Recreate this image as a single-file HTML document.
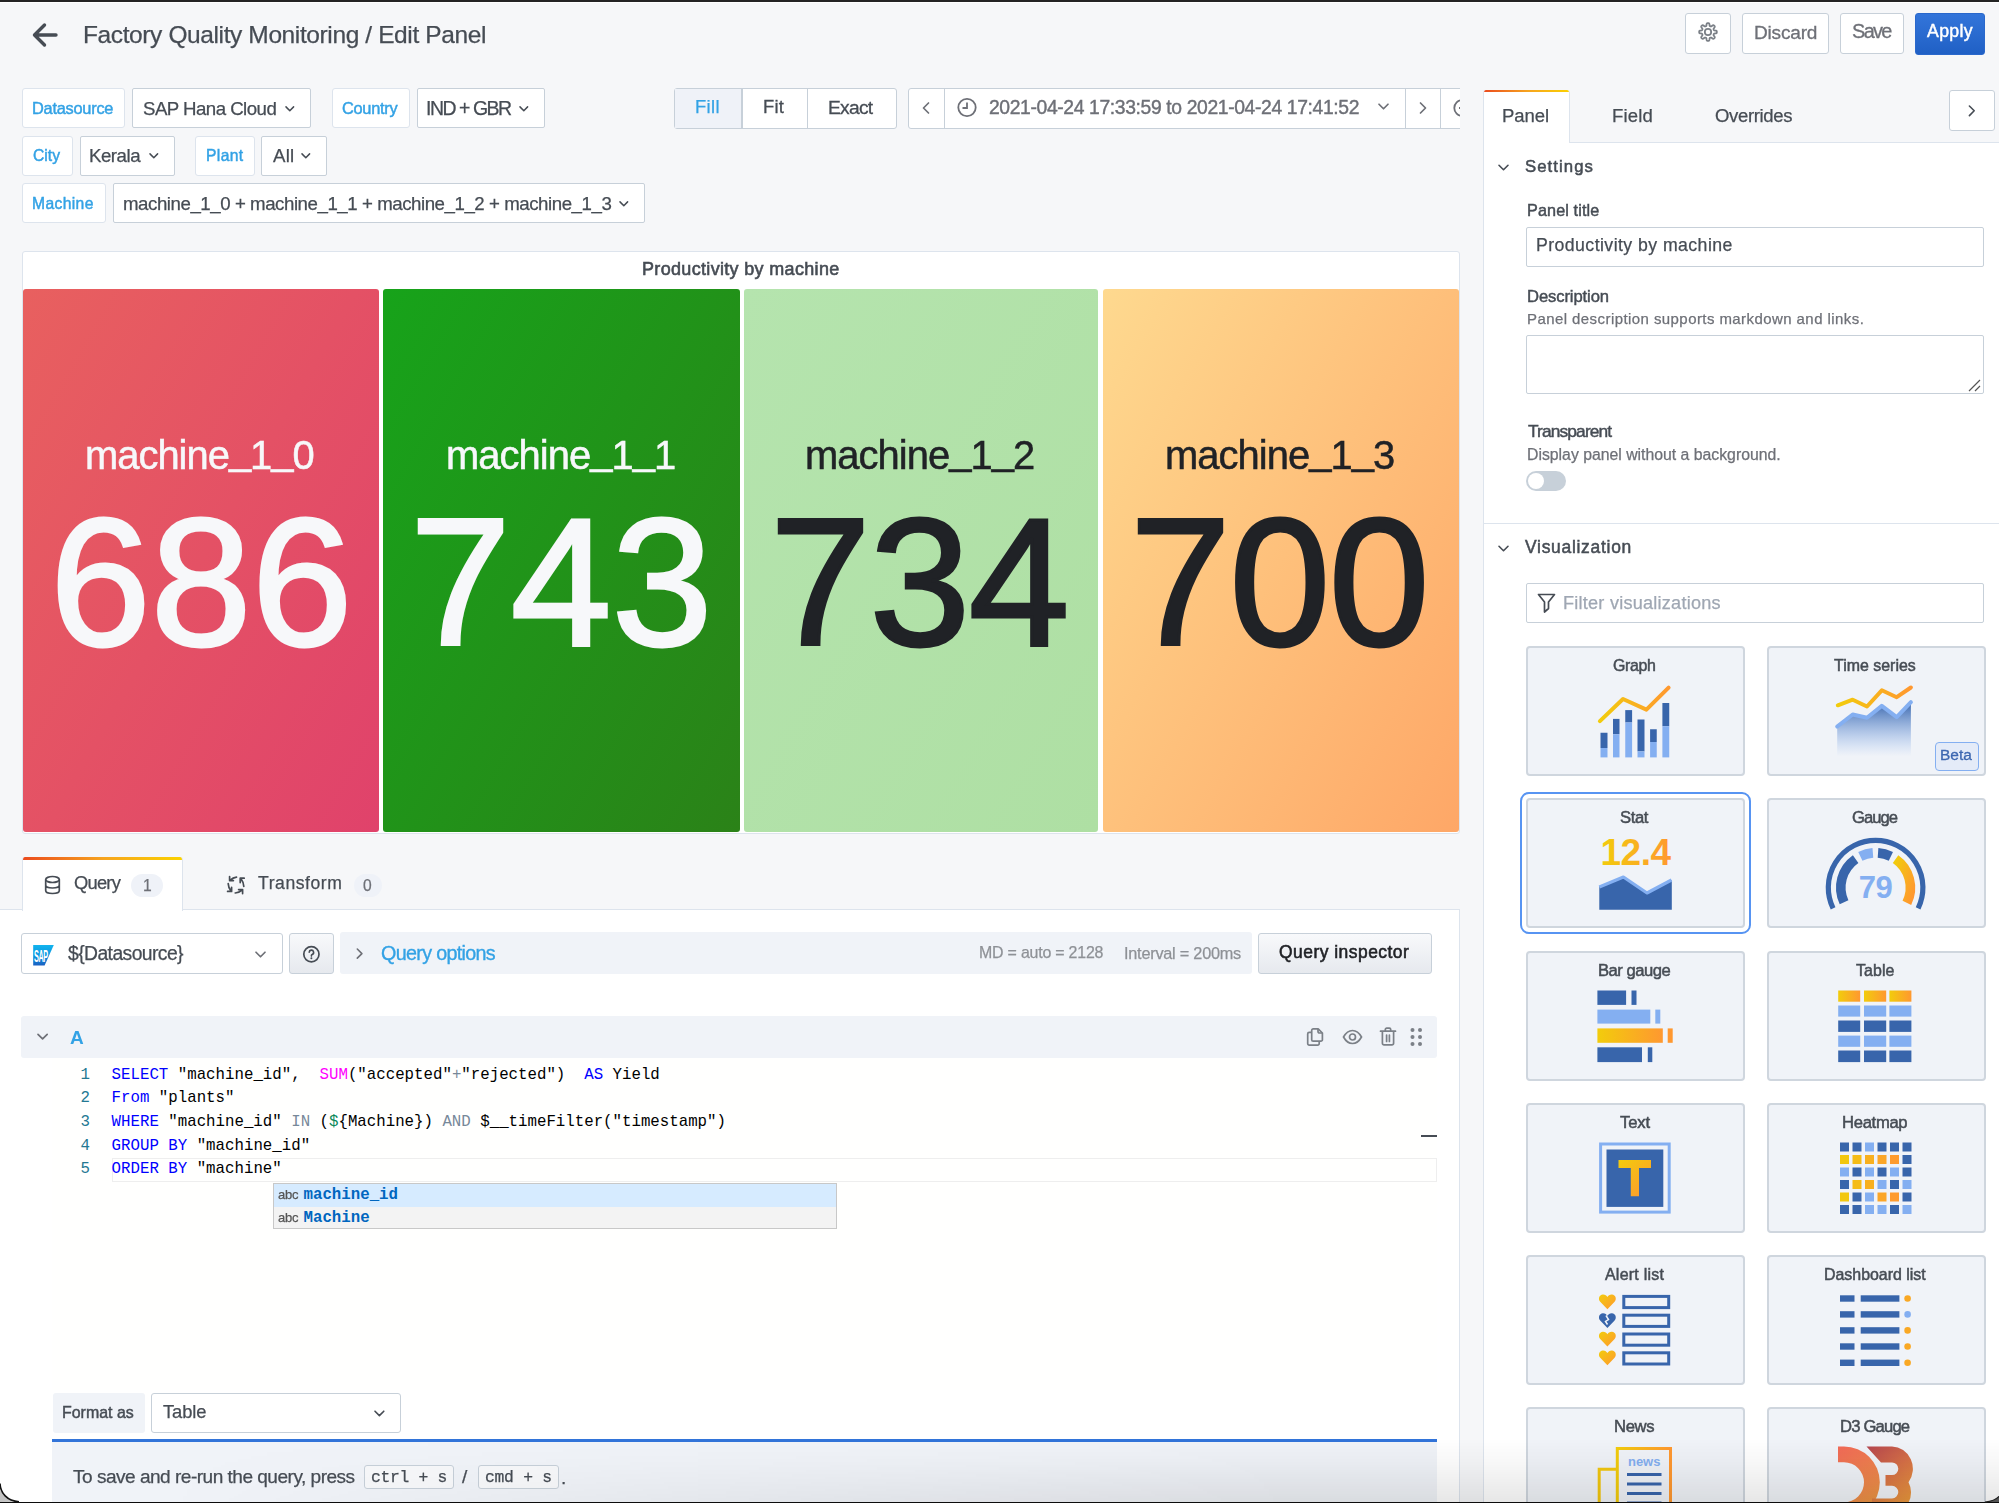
<!DOCTYPE html>
<html><head><meta charset="utf-8"><style>*{box-sizing:border-box;margin:0;padding:0}
html,body{-webkit-font-smoothing:antialiased;width:1999px;height:1503px;overflow:hidden;background:#f6f7f9;font-family:"Liberation Sans",sans-serif;color:#464c54;position:relative}
.a{position:absolute}
.box{position:absolute;background:#fff;border:1px solid #c7d0d9;border-radius:3px}
.chev{position:absolute;width:8px;height:8px;border-right:1.7px solid #6e7077;border-bottom:1.7px solid #6e7077;transform:rotate(45deg)}
.stat{position:absolute;top:289px;height:543px;border-radius:3px}
.card{position:absolute;width:219px;height:130px;background:#f0f3f8;border:2px solid #cfd6de;border-radius:4px}
.card svg{position:absolute}
</style></head><body>
<div class="a" style="left:0;top:0;width:1999px;height:2px;background:#242424"></div>
<div class="a" style="left:0;top:2px;width:1999px;height:1px;background:#fff"></div>
<svg class="a" style="left:30px;top:20px" width="30" height="30" viewBox="0 0 30 30"><path d="M14.5 5 L4.5 15 L14.5 25 M4.5 15 L26 15" fill="none" stroke="#464c54" stroke-width="3.4" stroke-linecap="round" stroke-linejoin="round"/></svg>
<div class="a" style="left:83.09px;top:23.25px;font-size:24.51px;line-height:24.51px;letter-spacing:-0.387px;font-weight:normal;color:#464c54;font-family:'Liberation Sans';white-space:nowrap;will-change:transform;-webkit-text-stroke:0.25px #464c54;">Factory Quality Monitoring / Edit Panel</div>
<div class="box" style="left:1685px;top:13px;width:46px;height:41px"></div>
<svg class="a" style="left:1696.7px;top:21.1px" width="22" height="22" viewBox="0 0 22 22"><path fill="none" stroke="#7b8087" stroke-width="1.75" stroke-linejoin="round" d="M19.85,11.00 L19.84,10.77 L19.82,10.54 L19.78,10.31 L19.70,10.09 L19.53,9.88 L19.22,9.70 L18.68,9.58 L18.03,9.51 L17.50,9.44 L17.17,9.35 L17.00,9.22 L16.89,9.09 L16.81,8.94 L16.74,8.79 L16.68,8.65 L16.62,8.50 L16.56,8.35 L16.52,8.19 L16.50,8.02 L16.54,7.80 L16.70,7.51 L17.03,7.09 L17.44,6.57 L17.73,6.11 L17.83,5.76 L17.80,5.50 L17.70,5.28 L17.57,5.09 L17.42,4.91 L17.26,4.74 L17.09,4.58 L16.91,4.43 L16.72,4.30 L16.50,4.20 L16.24,4.17 L15.89,4.27 L15.43,4.56 L14.91,4.97 L14.49,5.30 L14.20,5.46 L13.98,5.50 L13.81,5.48 L13.65,5.44 L13.50,5.38 L13.35,5.32 L13.21,5.26 L13.06,5.19 L12.91,5.11 L12.78,5.00 L12.65,4.83 L12.56,4.50 L12.49,3.97 L12.42,3.32 L12.30,2.78 L12.12,2.47 L11.91,2.30 L11.69,2.22 L11.46,2.18 L11.23,2.16 L11.00,2.15 L10.77,2.16 L10.54,2.18 L10.31,2.22 L10.09,2.30 L9.88,2.47 L9.70,2.78 L9.58,3.32 L9.51,3.97 L9.44,4.50 L9.35,4.83 L9.22,5.00 L9.09,5.11 L8.94,5.19 L8.79,5.26 L8.65,5.32 L8.50,5.38 L8.35,5.44 L8.19,5.48 L8.02,5.50 L7.80,5.46 L7.51,5.30 L7.09,4.97 L6.57,4.56 L6.11,4.27 L5.76,4.17 L5.50,4.20 L5.28,4.30 L5.09,4.43 L4.91,4.58 L4.74,4.74 L4.58,4.91 L4.43,5.09 L4.30,5.28 L4.20,5.50 L4.17,5.76 L4.27,6.11 L4.56,6.57 L4.97,7.09 L5.30,7.51 L5.46,7.80 L5.50,8.02 L5.48,8.19 L5.44,8.35 L5.38,8.50 L5.32,8.65 L5.26,8.79 L5.19,8.94 L5.11,9.09 L5.00,9.22 L4.83,9.35 L4.50,9.44 L3.97,9.51 L3.32,9.58 L2.78,9.70 L2.47,9.88 L2.30,10.09 L2.22,10.31 L2.18,10.54 L2.16,10.77 L2.15,11.00 L2.16,11.23 L2.18,11.46 L2.22,11.69 L2.30,11.91 L2.47,12.12 L2.78,12.30 L3.32,12.42 L3.97,12.49 L4.50,12.56 L4.83,12.65 L5.00,12.78 L5.11,12.91 L5.19,13.06 L5.26,13.21 L5.32,13.35 L5.38,13.50 L5.44,13.65 L5.48,13.81 L5.50,13.98 L5.46,14.20 L5.30,14.49 L4.97,14.91 L4.56,15.43 L4.27,15.89 L4.17,16.24 L4.20,16.50 L4.30,16.72 L4.43,16.91 L4.58,17.09 L4.74,17.26 L4.91,17.42 L5.09,17.57 L5.28,17.70 L5.50,17.80 L5.76,17.83 L6.11,17.73 L6.57,17.44 L7.09,17.03 L7.51,16.70 L7.80,16.54 L8.02,16.50 L8.19,16.52 L8.35,16.56 L8.50,16.62 L8.65,16.68 L8.79,16.74 L8.94,16.81 L9.09,16.89 L9.22,17.00 L9.35,17.17 L9.44,17.50 L9.51,18.03 L9.58,18.68 L9.70,19.22 L9.88,19.53 L10.09,19.70 L10.31,19.78 L10.54,19.82 L10.77,19.84 L11.00,19.85 L11.23,19.84 L11.46,19.82 L11.69,19.78 L11.91,19.70 L12.12,19.53 L12.30,19.22 L12.42,18.68 L12.49,18.03 L12.56,17.50 L12.65,17.17 L12.78,17.00 L12.91,16.89 L13.06,16.81 L13.21,16.74 L13.35,16.68 L13.50,16.62 L13.65,16.56 L13.81,16.52 L13.98,16.50 L14.20,16.54 L14.49,16.70 L14.91,17.03 L15.43,17.44 L15.89,17.73 L16.24,17.83 L16.50,17.80 L16.72,17.70 L16.91,17.57 L17.09,17.42 L17.26,17.26 L17.42,17.09 L17.57,16.91 L17.70,16.72 L17.80,16.50 L17.83,16.24 L17.73,15.89 L17.44,15.43 L17.03,14.91 L16.70,14.49 L16.54,14.20 L16.50,13.98 L16.52,13.81 L16.56,13.65 L16.62,13.50 L16.68,13.35 L16.74,13.21 L16.81,13.06 L16.89,12.91 L17.00,12.78 L17.17,12.65 L17.50,12.56 L18.03,12.49 L18.68,12.42 L19.22,12.30 L19.53,12.12 L19.70,11.91 L19.78,11.69 L19.82,11.46 L19.84,11.23 L19.85,11.00Z"/><circle cx="11" cy="11" r="3.2" fill="none" stroke="#7b8087" stroke-width="1.75"/></svg>
<div class="box" style="left:1742px;top:13px;width:87px;height:41px"></div>
<div class="a" style="left:1754.11px;top:22.56px;font-size:19.06px;line-height:19.06px;letter-spacing:-0.193px;font-weight:normal;color:#6e7077;font-family:'Liberation Sans';white-space:nowrap;will-change:transform;-webkit-text-stroke:0.3px #6e7077;">Discard</div>
<div class="box" style="left:1840px;top:13px;width:64px;height:41px"></div>
<div class="a" style="left:1851.78px;top:21.85px;font-size:19.91px;line-height:19.91px;letter-spacing:-1.651px;font-weight:normal;color:#6e7077;font-family:'Liberation Sans';white-space:nowrap;will-change:transform;-webkit-text-stroke:0.3px #6e7077;">Save</div>
<div class="box" style="left:1915px;top:12.5px;width:70px;height:42px;background:linear-gradient(#3375da,#2060c5);border-color:#2a68cc"></div>
<div class="a" style="left:1926.50px;top:22.92px;font-size:17.70px;line-height:17.70px;letter-spacing:0.355px;font-weight:normal;color:#ffffff;font-family:'Liberation Sans';white-space:nowrap;will-change:transform;-webkit-text-stroke:0.45px #ffffff;">Apply</div>
<div class="box" style="left:22px;top:88px;width:103px;height:40px;border-color:#dde4ed"></div>
<div class="a" style="left:32.42px;top:100.06px;font-size:16.36px;line-height:16.36px;letter-spacing:-0.244px;font-weight:normal;color:#33a2e5;font-family:'Liberation Sans';white-space:nowrap;will-change:transform;-webkit-text-stroke:0.45px #33a2e5;">Datasource</div>
<div class="box" style="left:131.5px;top:88px;width:179.0px;height:40px;border-radius:2px"></div>
<div class="a" style="left:143.42px;top:99.71px;font-size:18.66px;line-height:18.66px;letter-spacing:-0.531px;font-weight:normal;color:#464c54;font-family:'Liberation Sans';white-space:nowrap;will-change:transform;-webkit-text-stroke:0.25px #464c54;">SAP Hana Cloud</div>
<svg class="a" style="left:283.70px;top:102.70px" width="11.6" height="11.6" viewBox="-5.8 -5.8 11.6 11.6"><path d="M-3.8,-1.9 L0,1.9 L3.8,-1.9" fill="none" stroke="#464c54" stroke-width="1.5" stroke-linecap="round" stroke-linejoin="round"/></svg>
<div class="box" style="left:331.5px;top:88px;width:78.0px;height:40px;border-color:#dde4ed"></div>
<div class="a" style="left:342.23px;top:100.06px;font-size:16.36px;line-height:16.36px;letter-spacing:-0.284px;font-weight:normal;color:#33a2e5;font-family:'Liberation Sans';white-space:nowrap;will-change:transform;-webkit-text-stroke:0.45px #33a2e5;">Country</div>
<div class="box" style="left:416.5px;top:88px;width:128.5px;height:40px;border-radius:2px"></div>
<div class="a" style="left:426.38px;top:99.01px;font-size:19.48px;line-height:19.48px;letter-spacing:-1.473px;font-weight:normal;color:#464c54;font-family:'Liberation Sans';white-space:nowrap;will-change:transform;-webkit-text-stroke:0.25px #464c54;">IND + GBR</div>
<svg class="a" style="left:518.20px;top:102.70px" width="11.6" height="11.6" viewBox="-5.8 -5.8 11.6 11.6"><path d="M-3.8,-1.9 L0,1.9 L3.8,-1.9" fill="none" stroke="#464c54" stroke-width="1.5" stroke-linecap="round" stroke-linejoin="round"/></svg>
<div class="box" style="left:22px;top:135.5px;width:50.5px;height:40px;border-color:#dde4ed"></div>
<div class="a" style="left:32.97px;top:148.14px;font-size:15.66px;line-height:15.66px;letter-spacing:0.022px;font-weight:normal;color:#33a2e5;font-family:'Liberation Sans';white-space:nowrap;will-change:transform;-webkit-text-stroke:0.45px #33a2e5;">City</div>
<div class="box" style="left:79.5px;top:135.5px;width:95.0px;height:40px;border-radius:2px"></div>
<div class="a" style="left:89.34px;top:147.21px;font-size:18.66px;line-height:18.66px;letter-spacing:-0.477px;font-weight:normal;color:#464c54;font-family:'Liberation Sans';white-space:nowrap;will-change:transform;-webkit-text-stroke:0.25px #464c54;">Kerala</div>
<svg class="a" style="left:147.70px;top:150.20px" width="11.6" height="11.6" viewBox="-5.8 -5.8 11.6 11.6"><path d="M-3.8,-1.9 L0,1.9 L3.8,-1.9" fill="none" stroke="#464c54" stroke-width="1.5" stroke-linecap="round" stroke-linejoin="round"/></svg>
<div class="box" style="left:194.5px;top:135.5px;width:60.0px;height:40px;border-color:#dde4ed"></div>
<div class="a" style="left:205.68px;top:148.14px;font-size:15.66px;line-height:15.66px;letter-spacing:0.369px;font-weight:normal;color:#33a2e5;font-family:'Liberation Sans';white-space:nowrap;will-change:transform;-webkit-text-stroke:0.45px #33a2e5;">Plant</div>
<div class="box" style="left:261px;top:135.5px;width:65.5px;height:40px;border-radius:2px"></div>
<div class="a" style="left:273.30px;top:147.21px;font-size:18.66px;line-height:18.66px;letter-spacing:0.249px;font-weight:normal;color:#464c54;font-family:'Liberation Sans';white-space:nowrap;will-change:transform;-webkit-text-stroke:0.25px #464c54;">All</div>
<svg class="a" style="left:299.70px;top:150.20px" width="11.6" height="11.6" viewBox="-5.8 -5.8 11.6 11.6"><path d="M-3.8,-1.9 L0,1.9 L3.8,-1.9" fill="none" stroke="#464c54" stroke-width="1.5" stroke-linecap="round" stroke-linejoin="round"/></svg>
<div class="box" style="left:22px;top:183px;width:83.5px;height:40px;border-color:#dde4ed"></div>
<div class="a" style="left:32.48px;top:195.64px;font-size:15.66px;line-height:15.66px;letter-spacing:0.361px;font-weight:normal;color:#33a2e5;font-family:'Liberation Sans';white-space:nowrap;will-change:transform;-webkit-text-stroke:0.45px #33a2e5;">Machine</div>
<div class="box" style="left:112.5px;top:183px;width:532.0px;height:40px;border-radius:2px"></div>
<div class="a" style="left:123.13px;top:194.71px;font-size:18.66px;line-height:18.66px;letter-spacing:-0.446px;font-weight:normal;color:#464c54;font-family:'Liberation Sans';white-space:nowrap;will-change:transform;-webkit-text-stroke:0.25px #464c54;">machine<span style="position:relative;top:-0.08em">_</span>1<span style="position:relative;top:-0.08em">_</span>0 + machine<span style="position:relative;top:-0.08em">_</span>1<span style="position:relative;top:-0.08em">_</span>1 + machine<span style="position:relative;top:-0.08em">_</span>1<span style="position:relative;top:-0.08em">_</span>2 + machine<span style="position:relative;top:-0.08em">_</span>1<span style="position:relative;top:-0.08em">_</span>3</div>
<svg class="a" style="left:617.70px;top:197.70px" width="11.6" height="11.6" viewBox="-5.8 -5.8 11.6 11.6"><path d="M-3.8,-1.9 L0,1.9 L3.8,-1.9" fill="none" stroke="#464c54" stroke-width="1.5" stroke-linecap="round" stroke-linejoin="round"/></svg>
<div class="box" style="left:674px;top:88px;width:223px;height:41px"></div>
<div class="a" style="left:675px;top:89px;width:66px;height:39px;background:#eff2f8"></div>
<div class="a" style="left:740.5px;top:89px;width:2px;height:39px;background:#c7d0d9"></div>
<div class="a" style="left:806.5px;top:89px;width:1px;height:39px;background:#c7d0d9"></div>
<div class="a" style="left:695.36px;top:98.24px;font-size:18.38px;line-height:18.38px;letter-spacing:0.389px;font-weight:normal;color:#33a2e5;font-family:'Liberation Sans';white-space:nowrap;will-change:transform;-webkit-text-stroke:0.25px #33a2e5;">Fill</div>
<div class="a" style="left:763.36px;top:98.24px;font-size:18.38px;line-height:18.38px;letter-spacing:0.226px;font-weight:normal;color:#464c54;font-family:'Liberation Sans';white-space:nowrap;will-change:transform;-webkit-text-stroke:0.3px #464c54;">Fit</div>
<div class="a" style="left:827.80px;top:97.55px;font-size:19.20px;line-height:19.20px;letter-spacing:-0.696px;font-weight:normal;color:#464c54;font-family:'Liberation Sans';white-space:nowrap;will-change:transform;-webkit-text-stroke:0.3px #464c54;">Exact</div>
<div class="a" style="left:908px;top:88px;width:552px;height:41px;overflow:hidden"><div class="box" style="left:0;top:0;width:600px;height:41px"></div><div class="a" style="left:35.5px;top:0;width:1px;height:41px;background:#c7d0d9"></div><div class="a" style="left:497px;top:0;width:1px;height:41px;background:#c7d0d9"></div><div class="a" style="left:532px;top:0;width:1px;height:41px;background:#c7d0d9"></div><svg class="a" style="left:535px;top:9px" width="22" height="22" viewBox="0 0 22 22"><circle cx="19.3" cy="11" r="8" fill="none" stroke="#6e7077" stroke-width="1.8"/><path d="M16 11h4" stroke="#6e7077" stroke-width="1.8"/></svg></div>
<svg class="a" style="left:919.00px;top:100.50px" width="14" height="14" viewBox="-7.0 -7.0 14 14"><path d="M2.5,-5 L-2.5,0 L2.5,5" fill="none" stroke="#6e7077" stroke-width="1.7" stroke-linecap="round" stroke-linejoin="round"/></svg>
<svg class="a" style="left:1415.70px;top:100.50px" width="14" height="14" viewBox="-7.0 -7.0 14 14"><path d="M-2.5,-5 L2.5,0 L-2.5,5" fill="none" stroke="#6e7077" stroke-width="1.7" stroke-linecap="round" stroke-linejoin="round"/></svg>
<svg class="a" style="left:1377.00px;top:100.00px" width="13.0" height="13.0" viewBox="-6.5 -6.5 13.0 13.0"><path d="M-4.5,-2.25 L0,2.25 L4.5,-2.25" fill="none" stroke="#6e7077" stroke-width="1.7" stroke-linecap="round" stroke-linejoin="round"/></svg>
<svg class="a" style="left:956px;top:97px" width="22" height="22" viewBox="0 0 22 22"><circle cx="11" cy="10.5" r="8.7" fill="none" stroke="#6e7077" stroke-width="1.8"/><path d="M11 5.5v5.5h-4.5" fill="none" stroke="#6e7077" stroke-width="1.8"/></svg>
<div class="a" style="left:989.09px;top:97.63px;font-size:19.34px;line-height:19.34px;letter-spacing:-0.376px;font-weight:normal;color:#6e7077;font-family:'Liberation Sans';white-space:nowrap;will-change:transform;-webkit-text-stroke:0.4px #6e7077;">2021-04-24 17:33:59 to 2021-04-24 17:41:52</div>
<div class="a" style="left:21.5px;top:250.5px;width:1438.5px;height:583px;background:#fff;border:1px solid #dde4ed;border-radius:3px"></div>
<div class="a" style="left:641.60px;top:260.68px;font-size:17.97px;line-height:17.97px;letter-spacing:0.346px;font-weight:normal;color:#464c54;font-family:'Liberation Sans';white-space:nowrap;will-change:transform;-webkit-text-stroke:0.6px #464c54;">Productivity by machine</div>
<div class="stat" style="left:23px;width:356px;background:linear-gradient(120deg,#e8605f,#e0426b)"></div>
<div class="a" style="left:85.41px;top:435.53px;font-size:39.90px;line-height:39.90px;letter-spacing:-0.988px;font-weight:normal;color:#f7f8fa;font-family:'Liberation Sans';white-space:nowrap;will-change:transform;-webkit-text-stroke:0.5px #f7f8fa;">machine<span style="position:relative;top:-0.13em">_</span>1<span style="position:relative;top:-0.13em">_</span>0</div>
<div class="a" style="left:49.71px;top:492.12px;font-size:181.19px;line-height:181.19px;letter-spacing:0.063px;font-weight:normal;color:#f7f8fa;font-family:'Liberation Sans';white-space:nowrap;will-change:transform;-webkit-text-stroke:3px #f7f8fa;">686</div>
<div class="stat" style="left:383px;width:357px;background:linear-gradient(120deg,#17a31a,#2b8218)"></div>
<div class="a" style="left:445.91px;top:435.53px;font-size:39.90px;line-height:39.90px;letter-spacing:-0.925px;font-weight:normal;color:#f7f8fa;font-family:'Liberation Sans';white-space:nowrap;will-change:transform;-webkit-text-stroke:0.5px #f7f8fa;">machine<span style="position:relative;top:-0.13em">_</span>1<span style="position:relative;top:-0.13em">_</span>1</div>
<div class="a" style="left:410.21px;top:492.12px;font-size:181.19px;line-height:181.19px;letter-spacing:0.063px;font-weight:normal;color:#f7f8fa;font-family:'Liberation Sans';white-space:nowrap;will-change:transform;-webkit-text-stroke:3px #f7f8fa;">743</div>
<div class="stat" style="left:743.8px;width:354.20000000000005px;background:linear-gradient(120deg,#b5e4ae,#aedfa3)"></div>
<div class="a" style="left:805.31px;top:435.53px;font-size:39.90px;line-height:39.90px;letter-spacing:-0.925px;font-weight:normal;color:#202226;font-family:'Liberation Sans';white-space:nowrap;will-change:transform;-webkit-text-stroke:0.5px #202226;">machine<span style="position:relative;top:-0.13em">_</span>1<span style="position:relative;top:-0.13em">_</span>2</div>
<div class="a" style="left:769.61px;top:492.12px;font-size:181.19px;line-height:181.19px;letter-spacing:-1.352px;font-weight:normal;color:#202226;font-family:'Liberation Sans';white-space:nowrap;will-change:transform;-webkit-text-stroke:3px #202226;">734</div>
<div class="stat" style="left:1103px;width:356px;background:linear-gradient(120deg,#fed98f,#fea767)"></div>
<div class="a" style="left:1165.41px;top:435.53px;font-size:39.90px;line-height:39.90px;letter-spacing:-0.925px;font-weight:normal;color:#202226;font-family:'Liberation Sans';white-space:nowrap;will-change:transform;-webkit-text-stroke:0.5px #202226;">machine<span style="position:relative;top:-0.13em">_</span>1<span style="position:relative;top:-0.13em">_</span>3</div>
<div class="a" style="left:1129.71px;top:492.12px;font-size:181.19px;line-height:181.19px;letter-spacing:-1.352px;font-weight:normal;color:#202226;font-family:'Liberation Sans';white-space:nowrap;will-change:transform;-webkit-text-stroke:3px #202226;">700</div>
<div class="a" style="left:0;top:909px;width:1460px;height:1px;background:#dde4ed"></div>
<div class="a" style="left:0;top:910px;width:1459px;height:593px;background:#fff"></div>
<div class="a" style="left:1459px;top:910px;width:1px;height:593px;background:#dde4ed"></div>
<div class="a" style="left:22px;top:857px;width:161px;height:54px;background:#fff;border-left:1px solid #dde4ed;border-right:1px solid #dde4ed;border-radius:3px 3px 0 0;overflow:hidden"><div class="a" style="left:0;top:0;width:161px;height:2.5px;background:linear-gradient(90deg,#eb4b1e,#f6a41f,#fbd300)"></div></div>
<svg class="a" style="left:44px;top:875px" width="17" height="20" viewBox="0 0 17 20"><ellipse cx="8.5" cy="4.5" rx="6.8" ry="3" fill="none" stroke="#464c54" stroke-width="1.7"/><path d="M1.7 4.5v11c0 1.7 3 3 6.8 3s6.8-1.3 6.8-3v-11M1.7 10c0 1.7 3 3 6.8 3s6.8-1.3 6.8-3" fill="none" stroke="#464c54" stroke-width="1.7"/></svg>
<div class="a" style="left:73.94px;top:874.47px;font-size:18.35px;line-height:18.35px;letter-spacing:-0.775px;font-weight:normal;color:#464c54;font-family:'Liberation Sans';white-space:nowrap;will-change:transform;-webkit-text-stroke:0.25px #464c54;">Query</div>
<div class="a" style="left:131.2px;top:874.3px;width:31.4px;height:22.7px;border-radius:11.5px;background:#eff2f8"></div>
<div class="a" style="left:142.52px;top:877.76px;font-size:15.64px;line-height:15.64px;letter-spacing:0.000px;font-weight:normal;color:#6e7077;font-family:'Liberation Sans';white-space:nowrap;will-change:transform;-webkit-text-stroke:0.25px #6e7077;">1</div>
<svg class="a" style="left:220px;top:870px" width="32" height="30" viewBox="0 0 32 30"><g fill="none" stroke="#464c54" stroke-width="1.7" stroke-linecap="round" stroke-linejoin="round"><path d="M16.5,7.2 Q13,7.6 10.2,10.2 M9.6,6.6 V10.6 H13.4"/><path d="M23.8,16.4 Q23.6,12.4 21,8.8 M20.2,12.6 V8.2 H24.2"/><path d="M15.2,23 Q19.2,22.8 22.2,20.2 M22.6,23.6 V19.6 H18.6"/><path d="M8.2,13.6 Q8.4,18 11,21 M7.6,21.4 H11.6 V17.4"/></g></svg>
<div class="a" style="left:258.33px;top:875.13px;font-size:17.57px;line-height:17.57px;letter-spacing:0.563px;font-weight:normal;color:#464c54;font-family:'Liberation Sans';white-space:nowrap;will-change:transform;-webkit-text-stroke:0.25px #464c54;">Transform</div>
<div class="a" style="left:353.7px;top:874.3px;width:28.3px;height:22.7px;border-radius:11.5px;background:#eff2f8"></div>
<div class="a" style="left:362.51px;top:877.76px;font-size:15.64px;line-height:15.64px;letter-spacing:0.000px;font-weight:normal;color:#6e7077;font-family:'Liberation Sans';white-space:nowrap;will-change:transform;-webkit-text-stroke:0.25px #6e7077;">0</div>
<div class="box" style="left:21.3px;top:932.7px;width:261.4px;height:41px"></div>
<svg class="a" style="left:33px;top:944.5px" width="21" height="21" viewBox="0 0 21 21"><defs><linearGradient id="sapg" x1="0" y1="0" x2="0" y2="1"><stop offset="0" stop-color="#12b4ee"/><stop offset="0.6" stop-color="#0a8fdc"/><stop offset="1" stop-color="#1b5fc1"/></linearGradient></defs><path d="M0.2 0H20.8L11.6 20.5H0.2Z" fill="url(#sapg)"/><text x="1.6" y="13.8" font-family="Liberation Sans" font-weight="bold" font-size="13" fill="#fff" letter-spacing="-0.6" transform="scale(0.56,1.2)">SAP</text></svg>
<div class="a" style="left:67.50px;top:944.13px;font-size:19.33px;line-height:19.33px;letter-spacing:-0.577px;font-weight:normal;color:#464c54;font-family:'Liberation Sans';white-space:nowrap;will-change:transform;-webkit-text-stroke:0.25px #464c54;">${Datasource}</div>
<svg class="a" style="left:254.10px;top:948.00px" width="13.0" height="13.0" viewBox="-6.5 -6.5 13.0 13.0"><path d="M-4.5,-2.25 L0,2.25 L4.5,-2.25" fill="none" stroke="#6e7077" stroke-width="1.7" stroke-linecap="round" stroke-linejoin="round"/></svg>
<div class="box" style="left:288.75px;top:932.7px;width:45px;height:41px;background:linear-gradient(#f8f9fb,#e6e9ee)"></div>
<svg class="a" style="left:300.5px;top:943.5px" width="21" height="21" viewBox="0 0 21 21"><circle cx="10.4" cy="10.2" r="7.6" fill="none" stroke="#464c54" stroke-width="1.7"/><path d="M8.2 8.3a2.2 2.2 0 1 1 3 2.1c-.6.3-.8.7-.8 1.3v.4" fill="none" stroke="#464c54" stroke-width="1.6" stroke-linecap="round"/><circle cx="10.4" cy="14.3" r="1" fill="#464c54"/></svg>
<div class="a" style="left:339.5px;top:932.2px;width:912.5px;height:41.4px;background:#f0f3f8;border-radius:3px"></div>
<svg class="a" style="left:353.10px;top:946.80px" width="13.2" height="13.2" viewBox="-6.6 -6.6 13.2 13.2"><path d="M-2.3,-4.6 L2.3,0 L-2.3,4.6" fill="none" stroke="#6e7077" stroke-width="1.6" stroke-linecap="round" stroke-linejoin="round"/></svg>
<div class="a" style="left:380.82px;top:943.79px;font-size:19.74px;line-height:19.74px;letter-spacing:-0.677px;font-weight:normal;color:#33a2e5;font-family:'Liberation Sans';white-space:nowrap;will-change:transform;-webkit-text-stroke:0.35px #33a2e5;">Query options</div>
<div class="a" style="left:979.16px;top:945.32px;font-size:15.93px;line-height:15.93px;letter-spacing:-0.202px;font-weight:normal;color:#8e9196;font-family:'Liberation Sans';white-space:nowrap;will-change:transform;-webkit-text-stroke:0.25px #8e9196;">MD = auto = 2128</div>
<div class="a" style="left:1123.73px;top:945.00px;font-size:16.30px;line-height:16.30px;letter-spacing:-0.238px;font-weight:normal;color:#8e9196;font-family:'Liberation Sans';white-space:nowrap;will-change:transform;-webkit-text-stroke:0.25px #8e9196;">Interval = 200ms</div>
<div class="box" style="left:1258px;top:932.8px;width:174px;height:40.8px;background:linear-gradient(#f8f9fb,#e6e9ee)"></div>
<div class="a" style="left:1279.18px;top:943.55px;font-size:17.43px;line-height:17.43px;letter-spacing:0.491px;font-weight:normal;color:#202226;font-family:'Liberation Sans';white-space:nowrap;will-change:transform;-webkit-text-stroke:0.55px #202226;">Query inspector</div>
<div class="a" style="left:21px;top:1016.4px;width:1416px;height:41.4px;background:#f0f3f8;border-radius:3px"></div>
<svg class="a" style="left:35.70px;top:1030.40px" width="13.2" height="13.2" viewBox="-6.6 -6.6 13.2 13.2"><path d="M-4.6,-2.3 L0,2.3 L4.6,-2.3" fill="none" stroke="#6e7077" stroke-width="1.7" stroke-linecap="round" stroke-linejoin="round"/></svg>
<div class="a" style="left:69.70px;top:1028.27px;font-size:19.06px;line-height:19.06px;letter-spacing:0.000px;font-weight:bold;color:#33a2e5;font-family:'Liberation Sans';white-space:nowrap;will-change:transform;">A</div>
<svg class="a" style="left:1305px;top:1026px" width="20" height="21" viewBox="0 0 20 21"><g fill="none" stroke="#7b8087" stroke-width="1.7" stroke-linejoin="round"><path d="M8.2,2.8 H13.2 L17.4,7 V13.7 A1.5,1.5 0 0 1 15.9,15.2 H8.2 A1.5,1.5 0 0 1 6.7,13.7 V4.3 A1.5,1.5 0 0 1 8.2,2.8 Z"/><path d="M13,3 V5.5 A1.5,1.5 0 0 0 14.5,7 H17.2"/><path d="M6.7,6.4 H4.2 A1.5,1.5 0 0 0 2.7,7.9 V17.6 A1.5,1.5 0 0 0 4.2,19.1 H12.7 A1.5,1.5 0 0 0 14.2,17.6 V15.2"/></g></svg>
<svg class="a" style="left:1341.5px;top:1028px" width="21" height="18" viewBox="0 0 21 18"><g fill="none" stroke="#7b8087" stroke-width="1.7"><path d="M1.5 9C4 4.5 7 2.5 10.5 2.5S17 4.5 19.5 9C17 13.5 14 15.5 10.5 15.5S4 13.5 1.5 9z"/><circle cx="10.5" cy="9" r="3"/></g></svg>
<svg class="a" style="left:1379px;top:1026px" width="18" height="21" viewBox="0 0 18 21"><g fill="none" stroke="#7b8087" stroke-width="1.7" stroke-linecap="round" stroke-linejoin="round"><path d="M1.5,5.2 H16.5 M6.3,5 V3.6 A1.4,1.4 0 0 1 7.7,2.2 H10.3 A1.4,1.4 0 0 1 11.7,3.6 V5 M3.4,5.5 V17.2 A1.6,1.6 0 0 0 5,18.8 H13 A1.6,1.6 0 0 0 14.6,17.2 V5.5 M7.6,9 V15.5 M10.4,9 V15.5"/></g></svg>
<svg class="a" style="left:1409px;top:1027px" width="15" height="20" viewBox="0 0 15 20"><g fill="#7b8087"><circle cx="3.5" cy="3" r="2"/><circle cx="11" cy="3" r="2"/><circle cx="3.5" cy="10" r="2"/><circle cx="11" cy="10" r="2"/><circle cx="3.5" cy="17" r="2"/><circle cx="11" cy="17" r="2"/></g></svg>
<div class="a" style="left:52px;top:1058px;width:1385px;height:332px;background:#fffffe"></div>
<div class="a" style="left:112px;top:1157.7px;width:1325px;height:24px;border:1px solid #eeeeee"></div>
<div class="a" style="left:1421px;top:1135px;width:16px;height:2px;background:#464c54"></div>
<div class="a" style="left:80.5px;top:1063.66px;font-family:'Liberation Mono',monospace;font-size:15.75px;line-height:23.5px;white-space:pre;color:#237893;">1</div>
<div class="a" style="left:111.6px;top:1063.66px;font-family:'Liberation Mono',monospace;font-size:15.75px;line-height:23.5px;white-space:pre;color:#000;"><span style="color:#0000ff">SELECT</span> "machine_id",  <span style="color:#ff00ff">SUM</span>("accepted"<span style="color:#778899">+</span>"rejected")  <span style="color:#0000ff">AS</span> Yield</div>
<div class="a" style="left:80.5px;top:1087.46px;font-family:'Liberation Mono',monospace;font-size:15.75px;line-height:23.5px;white-space:pre;color:#237893;">2</div>
<div class="a" style="left:111.6px;top:1087.46px;font-family:'Liberation Mono',monospace;font-size:15.75px;line-height:23.5px;white-space:pre;color:#000;"><span style="color:#0000ff">From</span> "plants"</div>
<div class="a" style="left:80.5px;top:1110.86px;font-family:'Liberation Mono',monospace;font-size:15.75px;line-height:23.5px;white-space:pre;color:#237893;">3</div>
<div class="a" style="left:111.6px;top:1110.86px;font-family:'Liberation Mono',monospace;font-size:15.75px;line-height:23.5px;white-space:pre;color:#000;"><span style="color:#0000ff">WHERE</span> "machine_id" <span style="color:#778899">IN</span> (<span style="color:#09885a">$</span>{Machine}) <span style="color:#778899">AND</span> $__timeFilter("timestamp")</div>
<div class="a" style="left:80.5px;top:1134.66px;font-family:'Liberation Mono',monospace;font-size:15.75px;line-height:23.5px;white-space:pre;color:#237893;">4</div>
<div class="a" style="left:111.6px;top:1134.66px;font-family:'Liberation Mono',monospace;font-size:15.75px;line-height:23.5px;white-space:pre;color:#000;"><span style="color:#0000ff">GROUP</span> <span style="color:#0000ff">BY</span> "machine_id"</div>
<div class="a" style="left:80.5px;top:1158.06px;font-family:'Liberation Mono',monospace;font-size:15.75px;line-height:23.5px;white-space:pre;color:#237893;">5</div>
<div class="a" style="left:111.6px;top:1158.06px;font-family:'Liberation Mono',monospace;font-size:15.75px;line-height:23.5px;white-space:pre;color:#000;"><span style="color:#0000ff">ORDER</span> <span style="color:#0000ff">BY</span> "machine"</div>
<div class="a" style="left:273px;top:1183px;width:564px;height:46px;border:1px solid #c8c8c8;background:#f3f3f3"></div>
<div class="a" style="left:274px;top:1184px;width:562px;height:22.5px;background:#d6ebff"></div>
<div class="a" style="left:277.59px;top:1188.00px;font-size:13.00px;line-height:13.00px;letter-spacing:-0.175px;font-weight:normal;color:#555;font-family:'Liberation Sans';white-space:nowrap;will-change:transform;-webkit-text-stroke:0.25px #555;">abc</div>
<div class="a" style="left:277.59px;top:1211.00px;font-size:13.00px;line-height:13.00px;letter-spacing:-0.175px;font-weight:normal;color:#555;font-family:'Liberation Sans';white-space:nowrap;will-change:transform;-webkit-text-stroke:0.25px #555;">abc</div>
<div class="a" style="left:303.5px;top:1184.06px;font-family:'Liberation Mono',monospace;font-size:15.75px;line-height:23.5px;white-space:pre;color:#000;"><span style="color:#0066bf;font-weight:bold">machine_id</span></div>
<div class="a" style="left:303.5px;top:1207.06px;font-family:'Liberation Mono',monospace;font-size:15.75px;line-height:23.5px;white-space:pre;color:#000;"><span style="color:#0066bf;font-weight:bold">Machine</span></div>
<div class="a" style="left:52.6px;top:1392.6px;width:92.4px;height:40.6px;background:#f0f3f8;border-radius:3px"></div>
<div class="a" style="left:61.96px;top:1404.92px;font-size:15.93px;line-height:15.93px;letter-spacing:0.018px;font-weight:normal;color:#464c54;font-family:'Liberation Sans';white-space:nowrap;will-change:transform;-webkit-text-stroke:0.45px #464c54;">Format as</div>
<div class="box" style="left:150.6px;top:1392.6px;width:250.4px;height:40.6px"></div>
<div class="a" style="left:162.91px;top:1403.14px;font-size:18.38px;line-height:18.38px;letter-spacing:-0.079px;font-weight:normal;color:#464c54;font-family:'Liberation Sans';white-space:nowrap;will-change:transform;-webkit-text-stroke:0.25px #464c54;">Table</div>
<svg class="a" style="left:372.90px;top:1406.60px" width="12.8" height="12.8" viewBox="-6.4 -6.4 12.8 12.8"><path d="M-4.4,-2.2 L0,2.2 L4.4,-2.2" fill="none" stroke="#464c54" stroke-width="1.6" stroke-linecap="round" stroke-linejoin="round"/></svg>
<div class="a" style="left:52px;top:1439.4px;width:1385px;height:3px;background:#3274d9"></div>
<div class="a" style="left:52px;top:1442.4px;width:1385px;height:61px;background:#f0f3f8"></div>
<div class="a" style="left:73.30px;top:1467.46px;font-size:19.06px;line-height:19.06px;letter-spacing:-0.504px;font-weight:normal;color:#464c54;font-family:'Liberation Sans';white-space:nowrap;will-change:transform;-webkit-text-stroke:0.25px #464c54;">To save and re-run the query, press</div>
<div class="box" style="left:364.4px;top:1464.6px;width:89.6px;height:24.6px;background:#f7f8fa;border-color:#c7d0d9"></div>
<div class="a" style="left:370.98px;top:1469.98px;font-size:16.34px;line-height:16.34px;letter-spacing:-0.300px;font-weight:normal;color:#464c54;font-family:'Liberation Mono';white-space:nowrap;will-change:transform;-webkit-text-stroke:0.25px #464c54;">ctrl + s</div>
<div class="a" style="left:462.00px;top:1467.46px;font-size:19.06px;line-height:19.06px;letter-spacing:0.000px;font-weight:normal;color:#464c54;font-family:'Liberation Sans';white-space:nowrap;will-change:transform;-webkit-text-stroke:0.25px #464c54;">/</div>
<div class="box" style="left:478.4px;top:1464.6px;width:80.4px;height:24.6px;background:#f7f8fa;border-color:#c7d0d9"></div>
<div class="a" style="left:485.18px;top:1469.98px;font-size:16.34px;line-height:16.34px;letter-spacing:-0.249px;font-weight:normal;color:#464c54;font-family:'Liberation Mono';white-space:nowrap;will-change:transform;-webkit-text-stroke:0.25px #464c54;">cmd + s</div>
<div class="a" style="left:560.52px;top:1467.52px;font-size:19.00px;line-height:19.00px;letter-spacing:0.000px;font-weight:normal;color:#464c54;font-family:'Liberation Sans';white-space:nowrap;will-change:transform;-webkit-text-stroke:0.25px #464c54;">.</div>
<div class="a" style="left:1482.5px;top:142px;width:517px;height:1361px;background:#fff;border-left:1px solid #dde4ed"></div>
<div class="a" style="left:1569px;top:141.5px;width:430px;height:1px;background:#dde4ed"></div>
<div class="a" style="left:1482.5px;top:89.5px;width:87.5px;height:53px;background:#fff;border-left:1px solid #dde4ed;border-right:1px solid #dde4ed;border-radius:3px 3px 0 0;overflow:hidden"><div class="a" style="left:0;top:0;width:88px;height:2.5px;background:linear-gradient(90deg,#eb4b1e,#f6a41f,#fbd300)"></div></div>
<div class="a" style="left:1501.55px;top:106.82px;font-size:18.52px;line-height:18.52px;letter-spacing:-0.049px;font-weight:normal;color:#464c54;font-family:'Liberation Sans';white-space:nowrap;will-change:transform;-webkit-text-stroke:0.25px #464c54;">Panel</div>
<div class="a" style="left:1611.55px;top:106.82px;font-size:18.52px;line-height:18.52px;letter-spacing:0.137px;font-weight:normal;color:#464c54;font-family:'Liberation Sans';white-space:nowrap;will-change:transform;-webkit-text-stroke:0.25px #464c54;">Field</div>
<div class="a" style="left:1715.13px;top:106.82px;font-size:18.52px;line-height:18.52px;letter-spacing:-0.353px;font-weight:normal;color:#464c54;font-family:'Liberation Sans';white-space:nowrap;will-change:transform;-webkit-text-stroke:0.25px #464c54;">Overrides</div>
<div class="box" style="left:1948.5px;top:89.8px;width:46px;height:41px"></div>
<svg class="a" style="left:1964.70px;top:103.50px" width="13.6" height="13.6" viewBox="-6.8 -6.8 13.6 13.6"><path d="M-2.4,-4.8 L2.4,0 L-2.4,4.8" fill="none" stroke="#464c54" stroke-width="1.6" stroke-linecap="round" stroke-linejoin="round"/></svg>
<svg class="a" style="left:1497.00px;top:160.50px" width="13.0" height="13.0" viewBox="-6.5 -6.5 13.0 13.0"><path d="M-4.5,-2.25 L0,2.25 L4.5,-2.25" fill="none" stroke="#464c54" stroke-width="1.6" stroke-linecap="round" stroke-linejoin="round"/></svg>
<div class="a" style="left:1525.18px;top:158.62px;font-size:16.75px;line-height:16.75px;letter-spacing:1.061px;font-weight:normal;color:#464c54;font-family:'Liberation Sans';white-space:nowrap;will-change:transform;-webkit-text-stroke:0.5px #464c54;">Settings</div>
<div class="a" style="left:1526.73px;top:202.08px;font-size:16.20px;line-height:16.20px;letter-spacing:0.116px;font-weight:normal;color:#464c54;font-family:'Liberation Sans';white-space:nowrap;will-change:transform;-webkit-text-stroke:0.45px #464c54;">Panel title</div>
<div class="box" style="left:1525.8px;top:226.5px;width:458.5px;height:40.1px;border-radius:2px"></div>
<div class="a" style="left:1536.02px;top:237.02px;font-size:17.70px;line-height:17.70px;letter-spacing:0.435px;font-weight:normal;color:#464c54;font-family:'Liberation Sans';white-space:nowrap;will-change:transform;-webkit-text-stroke:0.25px #464c54;">Productivity by machine</div>
<div class="a" style="left:1526.70px;top:288.94px;font-size:16.61px;line-height:16.61px;letter-spacing:-0.107px;font-weight:normal;color:#464c54;font-family:'Liberation Sans';white-space:nowrap;will-change:transform;-webkit-text-stroke:0.45px #464c54;">Description</div>
<div class="a" style="left:1526.83px;top:310.52px;font-size:14.98px;line-height:14.98px;letter-spacing:0.440px;font-weight:normal;color:#6e7077;font-family:'Liberation Sans';white-space:nowrap;will-change:transform;-webkit-text-stroke:0.25px #6e7077;">Panel description supports markdown and links.</div>
<div class="box" style="left:1525.8px;top:334.6px;width:458.5px;height:59.7px;border-radius:2px"></div>
<svg class="a" style="left:1966px;top:377px" width="15" height="15" viewBox="0 0 15 15"><path d="M3 14L14 3M9 14L14 9" stroke="#555" stroke-width="1.2"/></svg>
<div class="a" style="left:1527.73px;top:423.31px;font-size:17.35px;line-height:17.35px;letter-spacing:-0.869px;font-weight:normal;color:#464c54;font-family:'Liberation Sans';white-space:nowrap;will-change:transform;-webkit-text-stroke:0.45px #464c54;">Transparent</div>
<div class="a" style="left:1526.77px;top:446.63px;font-size:15.80px;line-height:15.80px;letter-spacing:-0.003px;font-weight:normal;color:#6e7077;font-family:'Liberation Sans';white-space:nowrap;will-change:transform;-webkit-text-stroke:0.25px #6e7077;">Display panel without a background.</div>
<div class="a" style="left:1525.8px;top:470.8px;width:40.7px;height:20.5px;border-radius:10.25px;background:#c7d0d9"></div>
<div class="a" style="left:1527.8px;top:472.8px;width:16.5px;height:16.5px;border-radius:50%;background:#fff"></div>
<div class="a" style="left:1482.5px;top:523px;width:517px;height:1px;background:#dde4ed"></div>
<svg class="a" style="left:1497.00px;top:541.50px" width="13.0" height="13.0" viewBox="-6.5 -6.5 13.0 13.0"><path d="M-4.5,-2.25 L0,2.25 L4.5,-2.25" fill="none" stroke="#464c54" stroke-width="1.6" stroke-linecap="round" stroke-linejoin="round"/></svg>
<div class="a" style="left:1525.20px;top:539.25px;font-size:17.43px;line-height:17.43px;letter-spacing:0.728px;font-weight:normal;color:#464c54;font-family:'Liberation Sans';white-space:nowrap;will-change:transform;-webkit-text-stroke:0.5px #464c54;">Visualization</div>
<div class="box" style="left:1525.8px;top:583.4px;width:458.5px;height:39.8px;border-radius:2px"></div>
<svg class="a" style="left:1536.5px;top:593px" width="19" height="21" viewBox="0 0 19 21"><path d="M1.5 1.5h16l-6 7.5v6.5l-4 3.5V9z" fill="none" stroke="#464c54" stroke-width="1.7" stroke-linejoin="round"/></svg>
<div class="a" style="left:1562.59px;top:593.67px;font-size:18.11px;line-height:18.11px;letter-spacing:0.230px;font-weight:normal;color:#9fa7b3;font-family:'Liberation Sans';white-space:nowrap;will-change:transform;-webkit-text-stroke:0.25px #9fa7b3;">Filter visualizations</div>
<svg width="0" height="0" style="position:absolute"><defs><linearGradient id="yo" x1="0" y1="0" x2="1" y2="0"><stop offset="0" stop-color="#f2cc0c"/><stop offset="1" stop-color="#ff9830"/></linearGradient><linearGradient id="yov" x1="0" y1="0" x2="1" y2="0" gradientUnits="objectBoundingBox"><stop offset="0" stop-color="#f2cc0c"/><stop offset="1" stop-color="#ff9830"/></linearGradient><linearGradient id="tsg" x1="0" y1="0" x2="0" y2="1"><stop offset="0" stop-color="#3865ab"/><stop offset="1" stop-color="#84aff1" stop-opacity="0"/></linearGradient><linearGradient id="go" x1="0" y1="0" x2="1" y2="1"><stop offset="0" stop-color="#f2cc0c"/><stop offset="1" stop-color="#ff9830"/></linearGradient></defs></svg>
<div class="card" style="left:1525.5px;top:645.5px"></div>
<svg class="a" style="left:1525.5px;top:645.5px" width="219" height="130" viewBox="0 0 219 130"><rect x="74.5" y="86.75" width="7.0" height="15.25" fill="#3865ab"/><rect x="74.5" y="102" width="7.0" height="9.400000000000006" fill="#84aff1"/><rect x="87" y="72.9" width="6.5" height="15.349999999999994" fill="#3865ab"/><rect x="87" y="88.25" width="6.5" height="23.150000000000006" fill="#84aff1"/><rect x="99.25" y="64.1" width="6.849999999999994" height="12.400000000000006" fill="#3865ab"/><rect x="99.25" y="76.5" width="6.849999999999994" height="34.900000000000006" fill="#84aff1"/><rect x="111.5" y="73.5" width="7.0" height="31.900000000000006" fill="#3865ab"/><rect x="111.5" y="105.4" width="7.0" height="6.0" fill="#84aff1"/><rect x="124.1" y="83.25" width="6.650000000000006" height="12.75" fill="#3865ab"/><rect x="124.1" y="96" width="6.650000000000006" height="15.400000000000006" fill="#84aff1"/><rect x="136.4" y="57" width="6.849999999999994" height="23.25" fill="#3865ab"/><rect x="136.4" y="80.25" width="6.849999999999994" height="31.150000000000006" fill="#84aff1"/><polyline points="73.9,75.1 97,53 120.4,63.6 142.6,41.6" fill="none" stroke="url(#yo)" stroke-width="4" stroke-linecap="round" stroke-linejoin="round"/></svg>
<div class="a" style="left:1613.25px;top:658.21px;font-size:15.93px;line-height:15.93px;letter-spacing:-0.335px;font-weight:normal;color:#464c54;font-family:'Liberation Sans';white-space:nowrap;will-change:transform;-webkit-text-stroke:0.5px #464c54;">Graph</div>
<div class="card" style="left:1767px;top:645.5px"></div>
<svg class="a" style="left:1767px;top:645.5px" width="219" height="130" viewBox="0 0 219 130"><path d="M70.2,80.5 L85.7,68.5 100,71.7 114.8,59.9 129.7,71.1 143.9,56.1 L143.9,110.3 L70.2,110.3Z" fill="url(#tsg)"/><polyline points="70.2,80.5 85.7,68.5 100,71.7 114.8,59.9 129.7,71.1 143.9,56.1" fill="none" stroke="#84aff1" stroke-width="4" stroke-linecap="round" stroke-linejoin="round"/><polyline points="70.8,59.3 85.7,53.7 100,60.5 114.8,44.3 129.7,51.2 143.9,41.5" fill="none" stroke="url(#yo)" stroke-width="4" stroke-linecap="round" stroke-linejoin="round"/></svg>
<div class="a" style="left:1834.25px;top:658.21px;font-size:15.93px;line-height:15.93px;letter-spacing:0.011px;font-weight:normal;color:#464c54;font-family:'Liberation Sans';white-space:nowrap;will-change:transform;-webkit-text-stroke:0.5px #464c54;">Time series</div>
<div class="a" style="left:1934.6px;top:742px;width:44.4px;height:28.5px;border:1.5px solid #84aff1;border-radius:4px;background:#e4ebf8"></div>
<div class="a" style="left:1940.29px;top:747.38px;font-size:15.50px;line-height:15.50px;letter-spacing:0.008px;font-weight:normal;color:#3d67b0;font-family:'Liberation Sans';white-space:nowrap;will-change:transform;-webkit-text-stroke:0.3px #3d67b0;">Beta</div>
<div class="a" style="left:1520px;top:792.3px;width:230.75px;height:141.45px;border:2.6px solid #5794f2;border-radius:9px"></div>
<div class="card" style="left:1525.5px;top:797.7px"></div>
<svg class="a" style="left:1525.5px;top:797.7px" width="219" height="130" viewBox="0 0 219 130"><text x="109.5" y="67" text-anchor="middle" font-family="Liberation Sans" font-weight="bold" font-size="37" fill="url(#yo)" letter-spacing="-0.5">12.4</text><path d="M73.3,88.2 L97.4,78.5 121,94.5 145.8,82.2 L145.8,111.8 L73.3,111.8Z" fill="#3865ab"/><polyline points="73.3,89 97.4,79 121,95 145.5,82" fill="none" stroke="#84aff1" stroke-width="3.2" stroke-linejoin="round"/></svg>
<div class="a" style="left:1620.48px;top:809.81px;font-size:16.64px;line-height:16.64px;letter-spacing:-0.379px;font-weight:normal;color:#464c54;font-family:'Liberation Sans';white-space:nowrap;will-change:transform;-webkit-text-stroke:0.5px #464c54;">Stat</div>
<div class="card" style="left:1767px;top:797.7px"></div>
<svg class="a" style="left:1767px;top:797.7px" width="219" height="130" viewBox="0 0 219 130"><path d="M66.09,110.33 A47.3,47.3 0 1 1 151.11,110.33" fill="none" stroke="#3865ab" stroke-width="5.2"/><path d="M77.06,104.31 A34.8,34.8 0 0 1 88.64,61.09" fill="none" stroke="#3865ab" stroke-width="9.6"/><path d="M93.34,58.32 A34.8,34.8 0 0 1 105.87,54.91" fill="none" stroke="#84aff1" stroke-width="9.6"/><path d="M111.03,54.88 A34.8,34.8 0 0 1 123.86,58.32" fill="none" stroke="#3865ab" stroke-width="9.6"/><path d="M128.56,61.09 A34.8,34.8 0 0 1 139.88,104.86" fill="none" stroke="url(#go)" stroke-width="9.6"/><text x="108.6" y="100" text-anchor="middle" font-family="Liberation Sans" font-weight="bold" font-size="31" fill="#84aff1" letter-spacing="-0.3">79</text></svg>
<div class="a" style="left:1851.92px;top:809.81px;font-size:16.64px;line-height:16.64px;letter-spacing:-0.952px;font-weight:normal;color:#464c54;font-family:'Liberation Sans';white-space:nowrap;will-change:transform;-webkit-text-stroke:0.5px #464c54;">Gauge</div>
<div class="card" style="left:1525.5px;top:950.5px"></div>
<svg class="a" style="left:1525.5px;top:950.5px" width="219" height="130" viewBox="0 0 219 130"><rect x="71.4" y="39.5" width="28.7" height="14.4" fill="#3865ab"/><rect x="105.5" y="39.5" width="5" height="14.4" fill="#3865ab"/><rect x="71.4" y="58.6" width="52.9" height="14" fill="#84aff1"/><rect x="129.3" y="58.6" width="5" height="14" fill="#84aff1"/><rect x="71.4" y="77.4" width="65.4" height="14.4" fill="url(#yo)"/><rect x="141.7" y="77.4" width="5" height="14.4" fill="#ff9830"/><rect x="71.4" y="96.3" width="44.6" height="14.8" fill="#3865ab"/><rect x="121.8" y="96.3" width="4.5" height="14.8" fill="#3865ab"/></svg>
<div class="a" style="left:1598.10px;top:962.61px;font-size:16.64px;line-height:16.64px;letter-spacing:-0.502px;font-weight:normal;color:#464c54;font-family:'Liberation Sans';white-space:nowrap;will-change:transform;-webkit-text-stroke:0.5px #464c54;">Bar gauge</div>
<div class="card" style="left:1767px;top:950.5px"></div>
<svg class="a" style="left:1767px;top:950.5px" width="219" height="130" viewBox="0 0 219 130"><rect x="71.2" y="39.5" width="22" height="11.2" fill="url(#yo)"/><rect x="97" y="39.5" width="22.2" height="11.2" fill="url(#yo)"/><rect x="122.4" y="39.5" width="22" height="11.2" fill="url(#yo)"/><rect x="71.2" y="54.5" width="22" height="11.1" fill="#84aff1"/><rect x="97" y="54.5" width="22.2" height="11.1" fill="#84aff1"/><rect x="122.4" y="54.5" width="22" height="11.1" fill="#84aff1"/><rect x="71.2" y="69.5" width="22" height="11.4" fill="#3865ab"/><rect x="97" y="69.5" width="22.2" height="11.4" fill="#3865ab"/><rect x="122.4" y="69.5" width="22" height="11.4" fill="#3865ab"/><rect x="71.2" y="84.6" width="22" height="11.2" fill="#84aff1"/><rect x="97" y="84.6" width="22.2" height="11.2" fill="#84aff1"/><rect x="122.4" y="84.6" width="22" height="11.2" fill="#84aff1"/><rect x="71.2" y="99.5" width="22" height="11.6" fill="#3865ab"/><rect x="97" y="99.5" width="22.2" height="11.6" fill="#3865ab"/><rect x="122.4" y="99.5" width="22" height="11.6" fill="#3865ab"/></svg>
<div class="a" style="left:1856.25px;top:963.21px;font-size:15.93px;line-height:15.93px;letter-spacing:0.077px;font-weight:normal;color:#464c54;font-family:'Liberation Sans';white-space:nowrap;will-change:transform;-webkit-text-stroke:0.5px #464c54;">Table</div>
<div class="card" style="left:1525.5px;top:1102.7px"></div>
<svg class="a" style="left:1525.5px;top:1102.7px" width="219" height="130" viewBox="0 0 219 130"><rect x="74.6" y="41" width="68.6" height="68.1" fill="none" stroke="#84aff1" stroke-width="3"/><rect x="80.5" y="46.5" width="56.8" height="57.4" fill="#3865ab"/><defs><linearGradient id="tg" gradientUnits="userSpaceOnUse" x1="92" y1="57" x2="125" y2="93"><stop offset="0" stop-color="#f2cc0c"/><stop offset="1" stop-color="#ff9830"/></linearGradient></defs><path d="M92.5,57 H125 V65 H113 V93.2 H104.8 V65 H92.5Z" fill="url(#tg)"/></svg>
<div class="a" style="left:1619.54px;top:1114.81px;font-size:16.64px;line-height:16.64px;letter-spacing:-0.105px;font-weight:normal;color:#464c54;font-family:'Liberation Sans';white-space:nowrap;will-change:transform;-webkit-text-stroke:0.5px #464c54;">Text</div>
<div class="card" style="left:1767px;top:1102.7px"></div>
<svg class="a" style="left:1767px;top:1102.7px" width="219" height="130" viewBox="0 0 219 130"><rect x="73.0" y="39.5" width="9" height="9" fill="#3865ab"/><rect x="85.5" y="39.5" width="9" height="9" fill="#3865ab"/><rect x="98.0" y="39.5" width="9" height="9" fill="#84aff1"/><rect x="110.5" y="39.5" width="9" height="9" fill="#3865ab"/><rect x="123.0" y="39.5" width="9" height="9" fill="#3865ab"/><rect x="135.5" y="39.5" width="9" height="9" fill="#3865ab"/><rect x="73.0" y="52.0" width="9" height="9" fill="#f2c70f"/><rect x="85.5" y="52.0" width="9" height="9" fill="#f5bc17"/><rect x="98.0" y="52.0" width="9" height="9" fill="#f8b01f"/><rect x="110.5" y="52.0" width="9" height="9" fill="#fba628"/><rect x="123.0" y="52.0" width="9" height="9" fill="#fe9b2e"/><rect x="135.5" y="52.0" width="9" height="9" fill="#3865ab"/><rect x="73.0" y="64.5" width="9" height="9" fill="#84aff1"/><rect x="85.5" y="64.5" width="9" height="9" fill="#3865ab"/><rect x="98.0" y="64.5" width="9" height="9" fill="#84aff1"/><rect x="110.5" y="64.5" width="9" height="9" fill="#3865ab"/><rect x="123.0" y="64.5" width="9" height="9" fill="#84aff1"/><rect x="135.5" y="64.5" width="9" height="9" fill="#3865ab"/><rect x="73.0" y="77.0" width="9" height="9" fill="#3865ab"/><rect x="85.5" y="77.0" width="9" height="9" fill="#f5bc17"/><rect x="98.0" y="77.0" width="9" height="9" fill="#f8b01f"/><rect x="110.5" y="77.0" width="9" height="9" fill="#84aff1"/><rect x="123.0" y="77.0" width="9" height="9" fill="#3865ab"/><rect x="135.5" y="77.0" width="9" height="9" fill="#84aff1"/><rect x="73.0" y="89.5" width="9" height="9" fill="#f2c70f"/><rect x="85.5" y="89.5" width="9" height="9" fill="#3865ab"/><rect x="98.0" y="89.5" width="9" height="9" fill="#84aff1"/><rect x="110.5" y="89.5" width="9" height="9" fill="#fba628"/><rect x="123.0" y="89.5" width="9" height="9" fill="#fe9b2e"/><rect x="135.5" y="89.5" width="9" height="9" fill="#3865ab"/><rect x="73.0" y="102.0" width="9" height="9" fill="#3865ab"/><rect x="85.5" y="102.0" width="9" height="9" fill="#3865ab"/><rect x="98.0" y="102.0" width="9" height="9" fill="#84aff1"/><rect x="110.5" y="102.0" width="9" height="9" fill="#84aff1"/><rect x="123.0" y="102.0" width="9" height="9" fill="#3865ab"/><rect x="135.5" y="102.0" width="9" height="9" fill="#84aff1"/></svg>
<div class="a" style="left:1842.40px;top:1114.81px;font-size:16.64px;line-height:16.64px;letter-spacing:-0.307px;font-weight:normal;color:#464c54;font-family:'Liberation Sans';white-space:nowrap;will-change:transform;-webkit-text-stroke:0.5px #464c54;">Heatmap</div>
<div class="card" style="left:1525.5px;top:1254.5px"></div>
<svg class="a" style="left:1525.5px;top:1254.5px" width="219" height="130" viewBox="0 0 219 130"><path transform="translate(81.4,46.7)" d="M0,7.5 L-7.2,0 C-9.5,-2.5 -8.5,-7 -4.5,-7.3 C-2.3,-7.4 -0.8,-6 0,-4.8 C0.8,-6 2.3,-7.4 4.5,-7.3 C8.5,-7 9.5,-2.5 7.2,0 Z" fill="url(#go)"/><rect x="97.8" y="41.4" width="44.9" height="11.2" fill="none" stroke="#3865ab" stroke-width="3"/><path transform="translate(81.4,65.5)" d="M0,7.5 L-7.2,0 C-9.5,-2.5 -8.5,-7 -4.5,-7.3 C-2.3,-7.4 -0.8,-6 0,-4.8 C0.8,-6 2.3,-7.4 4.5,-7.3 C8.5,-7 9.5,-2.5 7.2,0 Z" fill="#3865ab"/><path d="M80,60.5 L82.5,64.5 L79.5,66.5 L81.5,69.5" fill="none" stroke="#f0f3f8" stroke-width="1.5"/><rect x="97.8" y="60.2" width="44.9" height="11.2" fill="none" stroke="#3865ab" stroke-width="3"/><path transform="translate(81.4,84.1)" d="M0,7.5 L-7.2,0 C-9.5,-2.5 -8.5,-7 -4.5,-7.3 C-2.3,-7.4 -0.8,-6 0,-4.8 C0.8,-6 2.3,-7.4 4.5,-7.3 C8.5,-7 9.5,-2.5 7.2,0 Z" fill="url(#go)"/><rect x="97.8" y="79.0" width="44.9" height="11.2" fill="none" stroke="#3865ab" stroke-width="3"/><path transform="translate(81.4,102.8)" d="M0,7.5 L-7.2,0 C-9.5,-2.5 -8.5,-7 -4.5,-7.3 C-2.3,-7.4 -0.8,-6 0,-4.8 C0.8,-6 2.3,-7.4 4.5,-7.3 C8.5,-7 9.5,-2.5 7.2,0 Z" fill="url(#go)"/><rect x="97.8" y="97.8" width="44.9" height="11.2" fill="none" stroke="#3865ab" stroke-width="3"/></svg>
<div class="a" style="left:1605.30px;top:1267.21px;font-size:15.93px;line-height:15.93px;letter-spacing:0.254px;font-weight:normal;color:#464c54;font-family:'Liberation Sans';white-space:nowrap;will-change:transform;-webkit-text-stroke:0.5px #464c54;">Alert list</div>
<div class="card" style="left:1767px;top:1254.5px"></div>
<svg class="a" style="left:1767px;top:1254.5px" width="219" height="130" viewBox="0 0 219 130"><rect x="73" y="40.3" width="14.5" height="6.4" fill="#3865ab"/><rect x="93.7" y="40.3" width="38.7" height="6.4" fill="#3865ab"/><circle cx="140.6" cy="43.5" r="3.3" fill="#f9a824"/><rect x="73" y="56.199999999999996" width="14.5" height="6.4" fill="#3865ab"/><rect x="93.7" y="56.199999999999996" width="38.7" height="6.4" fill="#3865ab"/><circle cx="140.6" cy="59.4" r="3.3" fill="#84aff1"/><rect x="73" y="72.2" width="14.5" height="6.4" fill="#3865ab"/><rect x="93.7" y="72.2" width="38.7" height="6.4" fill="#3865ab"/><circle cx="140.6" cy="75.4" r="3.3" fill="#f9a824"/><rect x="73" y="88.3" width="14.5" height="6.4" fill="#3865ab"/><rect x="93.7" y="88.3" width="38.7" height="6.4" fill="#3865ab"/><circle cx="140.6" cy="91.5" r="3.3" fill="#f9a824"/><rect x="73" y="104.6" width="14.5" height="6.4" fill="#3865ab"/><rect x="93.7" y="104.6" width="38.7" height="6.4" fill="#3865ab"/><circle cx="140.6" cy="107.8" r="3.3" fill="#f9a824"/></svg>
<div class="a" style="left:1823.76px;top:1267.21px;font-size:15.93px;line-height:15.93px;letter-spacing:-0.004px;font-weight:normal;color:#464c54;font-family:'Liberation Sans';white-space:nowrap;will-change:transform;-webkit-text-stroke:0.5px #464c54;">Dashboard list</div>
<div class="card" style="left:1525.5px;top:1406.7px"></div>
<svg class="a" style="left:1525.5px;top:1406.7px" width="219" height="130" viewBox="0 0 219 130"><path d="M73.2,130 V62.3 H91.2" fill="none" stroke="#f2c70f" stroke-width="3"/><path d="M91.3,130 V41.4 H144.5 V130" fill="none" stroke="url(#yo)" stroke-width="3"/><text x="118.2" y="58.6" text-anchor="middle" font-family="Liberation Sans" font-weight="bold" font-size="13" fill="#84aff1">news</text><rect x="101" y="66" width="34.5" height="3" fill="#3865ab"/><rect x="101" y="75.5" width="34.5" height="3" fill="#3865ab"/><rect x="101" y="85" width="34.5" height="3" fill="#3865ab"/><rect x="101" y="94.5" width="34.5" height="3" fill="#3865ab"/></svg>
<div class="a" style="left:1614.00px;top:1418.81px;font-size:16.64px;line-height:16.64px;letter-spacing:-0.363px;font-weight:normal;color:#464c54;font-family:'Liberation Sans';white-space:nowrap;will-change:transform;-webkit-text-stroke:0.5px #464c54;">News</div>
<div class="card" style="left:1767px;top:1406.7px"></div>
<svg class="a" style="left:1767px;top:1406.7px" width="219" height="130" viewBox="0 0 219 130"><defs><linearGradient id="d3g" gradientUnits="userSpaceOnUse" x1="71" y1="39" x2="115" y2="111"><stop offset="0" stop-color="#f26a58"/><stop offset="0.6" stop-color="#ee8a4a"/><stop offset="1" stop-color="#e9a23a"/></linearGradient><linearGradient id="d3b" gradientUnits="userSpaceOnUse" x1="100" y1="39" x2="146" y2="100"><stop offset="0" stop-color="#b6464f"/><stop offset="0.45" stop-color="#d56f47"/><stop offset="0.75" stop-color="#e48a40"/><stop offset="1" stop-color="#eca03a"/></linearGradient></defs><path d="M71,39.5 H77 A35.8,35.8 0 0 1 77,111.1 H71 V95.3 H77 A20,20 0 0 0 77,55.3 H71 Z" fill="url(#d3g)"/><path d="M99.5,39.5 H125 A21.5,22.3 0 0 1 141.5,75.3 A21.5,21.5 0 0 1 125,106.8 H105 V91.4 H125 A6.3,6.3 0 0 0 125,78.8 H118.5 V68.1 H125 A6.3,6.3 0 0 0 125,55.5 H114 Z" fill="url(#d3b)"/></svg>
<div class="a" style="left:1839.90px;top:1418.81px;font-size:16.64px;line-height:16.64px;letter-spacing:-0.812px;font-weight:normal;color:#464c54;font-family:'Liberation Sans';white-space:nowrap;will-change:transform;-webkit-text-stroke:0.5px #464c54;">D3 Gauge</div>
<div class="a" style="left:0;top:1438px;width:1999px;height:63.5px;background:linear-gradient(rgba(0,0,0,0),rgba(0,0,0,0.03) 40%,rgba(0,0,0,0.095));-webkit-mask-image:linear-gradient(90deg,transparent 8%,rgba(0,0,0,0.5) 35%,black 65%);mask-image:linear-gradient(90deg,transparent 8%,rgba(0,0,0,0.5) 35%,black 65%)"></div>
<div class="a" style="left:0;top:1501.5px;width:1999px;height:1.5px;background:#0c0c0c"></div>
<svg class="a" style="left:0;top:1480px" width="30" height="23" viewBox="0 0 30 23"><path d="M0,3.5 C0.5,13 7,21 19,21.8 L0,22Z" fill="#c4c4c4"/><path d="M0,3.5 C0.5,13 7,21 19,21.8" fill="none" stroke="#111" stroke-width="1.6"/></svg>
<svg class="a" style="left:1979px;top:1490px" width="20" height="13" viewBox="0 0 20 13"><path d="M20,6 C17,9.5 12,11.5 6,12 L20,12Z" fill="#555"/><path d="M20,6.5 C17,9.8 12,11.6 6,12" fill="none" stroke="#222" stroke-width="1.2"/></svg>
</body></html>
